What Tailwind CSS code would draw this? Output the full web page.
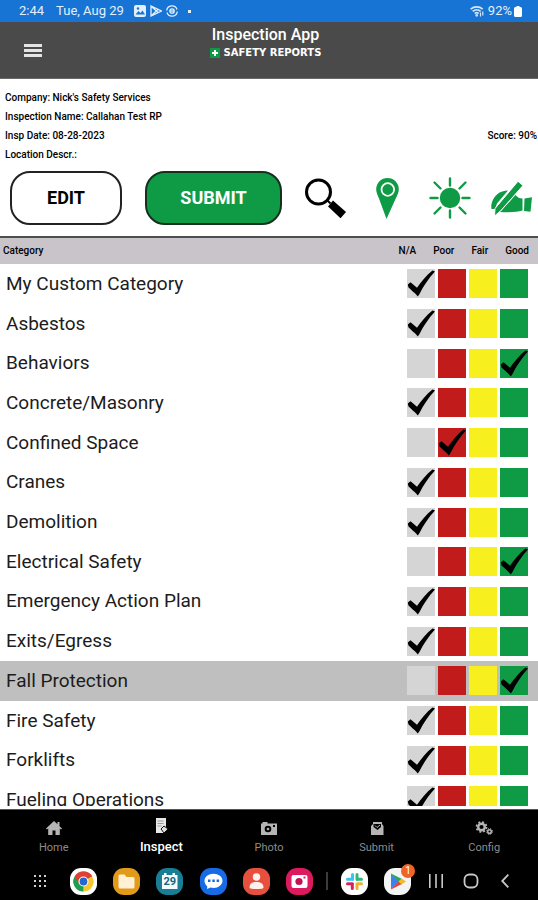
<!DOCTYPE html>
<html lang="en">
<head>
<meta charset="utf-8">
<meta name="viewport" content="width=device-width, initial-scale=1">
<title>Inspection App</title>
<script src="https://cdn.jsdelivr.net/npm/@tailwindcss/browser@4"></script>
</head>
<body class="flex h-screen flex-col overflow-hidden bg-white font-['Roboto',sans-serif] text-black">

<div class="flex h-[22px] shrink-0 items-center bg-[#1874d4] pr-4 pl-[19px] text-[13px] text-[#e3f0fb]">
  <span>2:44</span>
  <span class="ml-3">Tue, Aug 29</span>
  <svg class="ml-2.5 size-3" viewBox="0 0 12 12"><rect width="12" height="12" rx="2" fill="#e3f0fb"/><path d="M1.5 9.5 4.5 6l2 2 2-2.500 2.500 4z" fill="#1874d4"/><circle cx="4" cy="3.500" r="1.200" fill="#1874d4"/></svg>
  <svg class="ml-1 size-3" viewBox="0 0 12 12" fill="none" stroke="#e3f0fb" stroke-width="1.300"><path d="M1 1v10L11.300 6zM1 1l7 6.500M1 11l7-6.500"/></svg>
  <svg class="ml-1 size-3" viewBox="0 0 12 12" fill="none" stroke="#e3f0fb" stroke-width="1.300"><path d="M.7 5.500A5.300 5.300 0 0 1 11 4.500M11.300 6.500A5.300 5.300 0 0 1 1 7.500"/><circle cx="6" cy="6" r="2.200"/><path d="M4 6h4"/></svg>
  <span class="ml-2.5 size-[3px] bg-[#e3f0fb]"></span>
  <svg class="ml-auto h-3 w-3.5" viewBox="0 0 14 12" fill="none" stroke="#d3e6f8" stroke-width="1.600"><path d="M.7 4.200a9 9 0 0 1 12 0M2.700 6.400a6 6 0 0 1 8 0M4.700 8.500a3 3 0 0 1 4 0"/><circle cx="6.700" cy="10.300" r=".6"/><path d="M10.500 7.500v4M12.800 6.500v4" stroke-width="1.200"/></svg>
  <span class="ml-1">92%</span>
  <svg class="ml-0.5 h-[11px] w-2" viewBox="0 0 8 11" fill="#fff"><path d="M2.500 0h3v1.500h-3z"/><rect y="1" width="8" height="10" rx="1.500"/></svg>
</div>

<header class="grid h-[57px] shrink-0 grid-cols-[66px_1fr_73px] border-b border-[#6a6a6a] bg-[#4a4a4a]">
  <button class="flex items-center justify-center" aria-label="Menu">
    <svg class="h-[13px] w-[18px]" viewBox="0 0 18 13" fill="#e4e4e4"><path d="M0 0h18v3H0zM0 5h18v3H0zM0 10h18v3H0z"/></svg>
  </button>
  <div class="flex flex-col items-center pt-[3px]">
    <h1 class="text-base leading-5 font-medium text-white">Inspection App</h1>
    <p class="flex items-center gap-1 font-['DejaVu_Sans',sans-serif] text-[10px] leading-4 font-bold text-white">
      <svg class="size-[10px]" viewBox="0 0 10 10"><rect width="10" height="10" fill="#0d9a48"/><path d="M4 2h2v2h2v2H6v2H4V6H2V4h2z" fill="#fff"/></svg>
      SAFETY REPORTS
    </p>
  </div>
</header>

<section class="shrink-0 border-b-2 border-[#4f4f4f] pt-[9px] pb-[11px]">
  <div class="pl-[5px] text-[10px] leading-[19px] font-medium">
    <p>Company: Nick's Safety Services</p>
    <p>Inspection Name: Callahan Test RP</p>
    <p class="flex justify-between pr-px"><span>Insp Date: 08-28-2023</span><span>Score: 90%</span></p>
    <p>Location Descr.:</p>
  </div>
  <div class="mt-[7px] flex items-center justify-between pr-1.5 pl-2.5">
    <div class="flex items-center gap-[23px]">
      <button class="h-[54px] w-28 rounded-[20px] border-2 border-[#222] bg-white text-lg font-bold">EDIT</button>
      <button class="h-[54px] w-[137px] rounded-[20px] border-2 border-[#15301d] bg-[#0f9b46] text-lg font-bold text-white">SUBMIT</button>
      <button aria-label="Search">
        <svg class="size-[41px]" viewBox="0 0 41 41"><circle cx="13.500" cy="14" r="12" fill="none" stroke="#000" stroke-width="3"/><path d="M21.500 21.500l4 4" stroke="#000" stroke-width="2"/><path d="M28 22.500l13 11.500-5.500 6.200L23 28.500z"/></svg>
      </button>
    </div>
    <button aria-label="Location">
      <svg class="h-[41px] w-[23px]" viewBox="0 0 23 41"><path d="M11.500 0A11.300 11.300 0 0 0 .2 11.300c0 3 1.300 6 2.800 9.200L10.500 41 19.500 21c1.700-3.500 3.300-6.500 3.300-9.700A11.300 11.300 0 0 0 11.500 0z" fill="#0f9b46"/><circle cx="11.800" cy="11.500" r="6.300" fill="none" stroke="#fff" stroke-width="1.800"/></svg>
    </button>
    <div class="flex items-center gap-5">
      <button aria-label="Weather">
        <svg class="size-[42px]" viewBox="0 0 42 42" stroke="#0f9b46" stroke-width="2.400" stroke-linecap="round"><circle cx="21" cy="21" r="9" fill="#0f9b46"/><path d="M21 1.500v7M21 33.500v7M1.500 21h7M33.500 21h7M5.500 5.500l6 6M30.500 30.500l6 6M36.500 5.500l-6 6M11.500 30.500l-6 6"/></svg>
      </button>
      <button aria-label="Sign">
        <svg class="h-[35px] w-[41px]" viewBox="0 0 41 35" fill="#0f9b46"><path d="M.5 28C-.5 23 2 17 6 13.500 9.500 10.500 13 9.500 17 9.500L6 22.500 4 28z"/><path d="M24.500 14c2 2.500 4 3.500 7 3.500v12C26 31 20 31.500 9 31z"/><path d="M27 .3l5 4.200L9.500 30 3.500 35l.5-7.500z" stroke="#fff" stroke-width="1"/><path d="M33.500 17.500l7.500-1.200-1.500 14.500-6.500-.8z"/></svg>
      </button>
    </div>
  </div>
</section>

<main class="min-h-0 flex-1 overflow-hidden border-b-[3px] border-white">
  <table class="h-[582px] w-full table-fixed border-collapse">
    <colgroup><col><col class="w-[31px]"><col class="w-[31px]"><col class="w-[31px]"><col class="w-[38px]"></colgroup>
    <thead>
      <tr class="h-[26px] bg-[#c9c4ca] text-[10px] leading-[26px] font-medium">
        <th class="p-0 pl-[3px] text-left font-medium">Category</th>
        <th colspan="4" class="p-0 pr-[9px] font-medium"><div class="flex h-[26px] justify-end gap-[17px]"><span>N/A</span><span>Poor</span><span>Fair</span><span>Good</span></div></th>
      </tr>
    </thead>
    <tbody id="rows"></tbody>
  </table>
</main>

<nav class="grid h-[53px] shrink-0 grid-cols-5 border-t border-[#555] bg-black text-[11px] text-[#8c8c8c]">
  <a href="#" class="flex flex-col items-center pt-2.5">
    <svg class="h-4 w-4" viewBox="0 0 16 16" fill="#b5b5b5"><path d="M8 1l3.500 3.300V2h2v4.200L16 8.500l-1 1-1.200-1V15H9.500v-4.500h-3V15H2.200V8.500L1 9.500l-1-1z"/></svg>
    <span class="mt-1 leading-4">Home</span>
  </a>
  <a href="#" class="flex flex-col items-center pt-2 text-white">
    <svg class="h-4 w-4" viewBox="0 0 16 16"><path d="M3 0h10v10l-3 5H3z" fill="#e8e8e8"/><path d="M4.500 3h6M4.500 5.500h6M4.500 8h4" stroke="#999"/><path d="M8 11l3-3 4 3-4 4z" fill="#ddd" stroke="#111"/></svg>
    <span class="mt-1 text-[13px] leading-[18px] font-medium">Inspect</span>
  </a>
  <a href="#" class="flex flex-col items-center pt-2.5">
    <svg class="h-4 w-[18px]" viewBox="0 0 18 16"><path d="M1 3.500h1.500V2h5v1.500H17V15H1z" fill="#b5b5b5"/><circle cx="8" cy="9" r="3.300"/><circle cx="8" cy="9" r="1.300" fill="#b5b5b5"/><path d="M13 5h2v2h-2z"/></svg>
    <span class="mt-1 leading-4">Photo</span>
  </a>
  <a href="#" class="flex flex-col items-center pt-2.5">
    <svg class="h-4 w-4" viewBox="0 0 16 16"><path d="M2 6l2-2V2h9v2l1.500 2v9H2z" fill="#b5b5b5"/><path d="M4.500 4h7.500v3L8.500 10 4.500 7z"/><path d="M6 5.500l2 2 3-2.500" stroke="#b5b5b5" fill="none"/></svg>
    <span class="mt-1 leading-4">Submit</span>
  </a>
  <a href="#" class="flex flex-col items-center pt-2.5">
    <svg class="h-4 w-[18px]" viewBox="0 0 18 16" fill="none" stroke="#b5b5b5"><circle cx="6.500" cy="7" r="3.300" stroke-width="2.400"/><circle cx="6.500" cy="7" r="5" stroke-width="1.700" stroke-dasharray="2 1.930"/><circle cx="14.500" cy="11.500" r="1.800" stroke-width="1.500"/><circle cx="14.500" cy="11.500" r="2.900" stroke-dasharray="1.300 1"/></svg>
    <span class="mt-1 leading-4">Config</span>
  </a>
</nav>

<footer class="grid h-[38px] shrink-0 grid-cols-[repeat(7,43fr)_11fr_43fr_43fr_34fr_34fr_34fr] items-center justify-items-center bg-black pr-4 pl-[18px]">
  <button aria-label="All apps"><svg class="size-3" viewBox="0 0 12 12" fill="#d0d0d0"><path d="M0 0h2v2H0zM5 0h2v2H5zM10 0h2v2h-2zM0 5h2v2H0zM5 5h2v2H5zM10 5h2v2h-2zM0 10h2v2H0zM5 10h2v2H5zM10 10h2v2h-2z"/></svg></button>
  <button aria-label="Chrome"><svg class="size-[27px]" viewBox="0 0 27 27"><rect width="27" height="27" rx="11" fill="#fff"/><path d="M13.500 13.500L4.800 8.500A10 10 0 0 1 22.200 8.500z" fill="#de4032"/><path d="M13.500 13.500L22.200 8.500A10 10 0 0 1 13.500 23.500z" fill="#f7c52c"/><path d="M13.500 13.500V23.500A10 10 0 0 1 4.800 8.500z" fill="#1f9d50"/><path d="M13.500 8.500h8.700A10 10 0 0 0 4.800 8.500l4.400 7.500z" fill="#de4032"/><path d="M4.800 8.500l4.400 7.500 4.300 2.500-2 4.800A10 10 0 0 1 4.800 8.500z" fill="#1f9d50"/><circle cx="13.500" cy="13.500" r="5" fill="#fff"/><circle cx="13.500" cy="13.500" r="3.900" fill="#2467d1"/></svg></button>
  <button aria-label="Files"><svg class="size-[27px]" viewBox="0 0 27 27"><rect width="27" height="27" rx="11" fill="#e29b18"/><path d="M5.500 8a1.500 1.500 0 0 1 1.500-1.500h4.500l2 2.500H20a1.500 1.500 0 0 1 1.500 1.500V19a1.500 1.500 0 0 1-1.500 1.500H7A1.500 1.500 0 0 1 5.500 19z" fill="#fff0d6"/></svg></button>
  <button class="relative" aria-label="Calendar"><svg class="size-[27px]" viewBox="0 0 27 27"><rect width="27" height="27" rx="11" fill="#187d95"/><path d="M6 7h2V5h2.500v2h6V5H19v2h2.500v14H6z" fill="#f4fbfc"/></svg><span class="absolute inset-x-0 top-2 text-center text-[11px] leading-3 font-bold text-[#146578]">29</span></button>
  <button aria-label="Messages"><svg class="size-[27px]" viewBox="0 0 27 27"><rect width="27" height="27" rx="11" fill="#176be5"/><path d="M13.500 5.800c5 0 9 3 9 7s-4 7.200-9 7.200c-1 0-2 0-3-.4l-3.500 1.500.3-2.800C5.500 17 4.500 15 4.500 12.800c0-4 4-7 9-7z" fill="#fff"/><path d="M8 11.500h2.500V14H8zM12.300 11.500h2.500V14h-2.500zM16.600 11.500h2.500V14h-2.500z" fill="#176be5"/></svg></button>
  <button aria-label="Contacts"><svg class="size-[27px]" viewBox="0 0 27 27"><rect width="27" height="27" rx="11" fill="#e8503e"/><circle cx="13.500" cy="9" r="3.700" fill="#fff0ec"/><path d="M6.500 19.500c0-4 3-5.500 7-5.500s7 1.500 7 5.500c0 1-2 1.500-7 1.500s-7-.5-7-1.500z" fill="#fff0ec"/></svg></button>
  <button aria-label="Camera"><svg class="size-[27px]" viewBox="0 0 27 27"><rect width="27" height="27" rx="11" fill="#dc1a5e"/><rect x="5.500" y="7" width="16" height="13" rx="2" fill="#fff"/><circle cx="13" cy="13.500" r="3.600" fill="#c3124f"/><path d="M17.500 8.500h2v2h-2z" fill="#dc1a5e"/></svg></button>
  <span class="h-[18px] w-0.5 bg-[#3c3c3c]"></span>
  <button aria-label="Slack"><svg class="size-[27px]" viewBox="0 0 27 27" fill="none" stroke-width="3" stroke-linecap="round"><rect width="27" height="27" rx="11" fill="#fff"/><path d="M11.500 6.500v5M6.500 11.300h5" stroke="#36c5f0"/><path d="M16 6.500v5M16 11.300h4.500" stroke="#2eb67d"/><path d="M16 15.800h4.500M16 15.800v4.700" stroke="#ecb22e"/><path d="M11.300 15.800v4.700M6.500 15.800h5" stroke="#d81f59"/><path d="M13.600 5v17M5 13.600h17" stroke="#fff" stroke-width="1" stroke-linecap="butt"/></svg></button>
  <button class="relative" aria-label="Play Store"><svg class="size-[27px]" viewBox="0 0 27 27"><rect width="27" height="27" rx="11" fill="#f3f5f5"/><path d="M7 5.500l8 8L7 21.500z" fill="#3b82ea"/><path d="M7 5.500l11 5.500-3.500 3z" fill="#2da45c"/><path d="M7 21.500l11-5.500-3.500-3z" fill="#df493c"/><path d="M17.500 10.500l4.500 3-4.500 3-3-3z" fill="#f3ba22"/></svg><span class="absolute -top-1 -right-1 size-3.5 rounded-full bg-[#ef6428] text-center text-[10px] leading-3.5 text-white">1</span></button>
  <button aria-label="Recents"><svg class="h-3.5 w-3.5" viewBox="0 0 14 14" fill="#c8c8c8"><path d="M0 0h1.600v14H0zM6.200 0h1.600v14H6.200zM12.400 0H14v14h-1.600z"/></svg></button>
  <button aria-label="Home screen"><svg class="size-4" viewBox="0 0 16 16" fill="none" stroke="#c8c8c8" stroke-width="1.800"><rect x="1.500" y="1.500" width="13" height="13" rx="5"/></svg></button>
  <button aria-label="Back"><svg class="h-3.5 w-2" viewBox="0 0 8 14" fill="none" stroke="#c8c8c8" stroke-width="1.800"><path d="M7.300.7L1.200 7l6.100 6.300"/></svg></button>
</footer>

<script>
const ratings = [
  { name: 'N/A', box: 'bg-[#d5d5d5]' },
  { name: 'Poor', box: 'bg-[#c21b1c]' },
  { name: 'Fair', box: 'bg-[#f7f01e]' },
  { name: 'Good', box: 'bg-[#0f9b46]' }
];
const categories = [
  ['My Custom Category', 0], ['Asbestos', 0], ['Behaviors', 3], ['Concrete/Masonry', 0],
  ['Confined Space', 1], ['Cranes', 0], ['Demolition', 0], ['Electrical Safety', 3],
  ['Emergency Action Plan', 0], ['Exits/Egress', 0], ['Fall Protection', 3],
  ['Fire Safety', 0], ['Forklifts', 0], ['Fueling Operations', 0]
];
const selected = 'Fall Protection';

document.getElementById('rows').innerHTML = categories.map(([name, value], row) => `
  <tr class="${name === selected ? 'bg-[#bfbfbf]' : 'bg-white'}">
    <th scope="row" class="p-0 pl-1.5 text-left text-[19px] leading-6 font-normal text-[#1c1c1c]">${name}</th>
    ${ratings.map((rating, i) => `
    <td class="p-0">
      <label class="relative block h-[29px] w-7">
        <input type="radio" name="row-${row}" aria-label="${name}: ${rating.name}" class="peer block h-[29px] w-7 appearance-none ${rating.box}" ${i === value ? 'checked' : ''}>
        <svg class="pointer-events-none absolute inset-0 hidden h-[29px] w-7 peer-checked:block" viewBox="0 0 28 29"><path d="M.8 15.500L3.500 13.200 10 18.800C14 13 19.500 6 25.500 1.500L28 2.500C21.500 9.500 16.500 17 12.500 25L10.800 27.500C8.500 24.500 3.500 20.500 1.500 18.500z"/></svg>
      </label>
    </td>`).join('')}
  </tr>`).join('');
</script>
</body>
</html>
